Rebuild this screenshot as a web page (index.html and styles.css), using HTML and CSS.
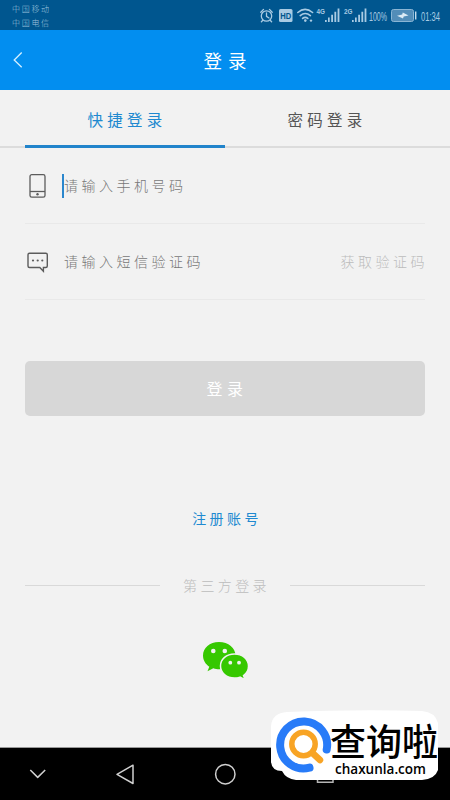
FILE: index.html
```html
<!DOCTYPE html>
<html lang="zh-CN">
<head>
<meta charset="utf-8">
<meta name="viewport" content="width=device-width, initial-scale=1">
<title>登录</title>
<link rel="stylesheet" href="styles.css">
</head>
<body>
<div class="screen">
  <div class="status">
    <div class="carriers"><span>中国移动</span><span>中国电信</span></div>
    <svg class="indicators" width="190" height="30" viewBox="0 0 190 30">
      <g fill="none" stroke="#a9cbe3" stroke-width="1.3" stroke-linecap="round">
        <circle cx="6.500" cy="16" r="5.200"/>
        <path d="M6.500 12.800V16.300L9 18M.8 12.200 3.500 9.400M12.200 12.200 9.500 9.400M2.600 20.500 1.400 21.800M10.400 20.500 11.600 21.800"/>
        <path d="M37.800 12.500Q45 6.200 52.600 12.500M40.200 15.600Q45.200 11.500 50.400 15.600M42.600 18.400Q45.200 16.200 47.800 18.400" stroke-width="1.6"/>
      </g>
      <rect x="19" y="9" width="13.500" height="13" rx="1.500" fill="#a9cbe3"/>
      <text x="20.300" y="19.200" class="hd" textLength="11" lengthAdjust="spacingAndGlyphs">HD</text>
      <g fill="#a9cbe3">
        <circle cx="45.300" cy="20.600" r="1.300"/><circle cx="51" cy="20.600" r="1.200"/>
        <text x="56.500" y="14" class="net" textLength="8.500" lengthAdjust="spacingAndGlyphs">4G</text>
        <path d="M65 20h1.700v2H65zM68 17.500h1.700V22H68zM71.200 14.700h1.800V22h-1.800zM74.400 11.700h1.800V22h-1.800zM77.600 8.500h1.800V22h-1.800z"/>
        <text x="84" y="14" class="net" textLength="8.500" lengthAdjust="spacingAndGlyphs">2G</text>
        <path d="M92 20h1.700v2H92zM95 17.500h1.700V22H95zM98.200 14.700h1.800V22h-1.800zM101.400 11.700h1.800V22h-1.800zM104.600 8.500h1.800V22h-1.800z"/>
        <text x="109" y="20.700" class="num" textLength="18" lengthAdjust="spacingAndGlyphs">100%</text>
        <text x="161" y="20.700" class="num" textLength="19" lengthAdjust="spacingAndGlyphs">01:34</text>
      </g>
      <rect x="131.500" y="9.500" width="22" height="12" rx="2" fill="#528db8" stroke="#8ab5d4"/>
      <path d="M155 11.500h1.400v8H155z" fill="#c4dced"/>
      <path d="M137 15.700 142.200 14.600 142.800 12.600 148.500 15.400 143.700 16.500 143 18.400Z" fill="#dcebf5"/>
    </svg>
  </div>
  <header class="bar">
    <svg class="back" width="10" height="18" viewBox="0 0 10 18"><path d="M8.700 1.500 1.200 9 8.700 16.300" fill="none" stroke="#d5f0ff" stroke-width="1.300"/></svg>
    <h1>登录</h1>
  </header>
  <nav class="tabs">
    <a class="tab active">快捷登录</a>
    <a class="tab">密码登录</a>
  </nav>
  <main class="form">
    <div class="row">
      <svg class="icon" width="24" height="26" viewBox="0 0 24 26"><g fill="none" stroke="#5c5c5c" stroke-width="1.300"><rect x="5" y="1.700" width="15" height="22.500" rx="1.800"/><path d="M5 18.500h15"/></g><circle cx="12.500" cy="21.300" r="1.200" fill="#5c5c5c"/></svg>
      <i class="caret"></i>
      <span class="hint">请输入手机号码</span>
    </div>
    <div class="row code">
      <svg class="icon" width="24" height="26" viewBox="0 0 24 26"><path d="M4.500 4.300h16.300q1.500 0 1.500 1.500V17q0 1.500-1.500 1.500H18.400V22.200L14.800 18.500H4.500Q3 18.500 3 17V5.800Q3 4.300 4.500 4.300Z" fill="none" stroke="#5c5c5c" stroke-width="1.400"/><g fill="#5c5c5c"><circle cx="8" cy="11.500" r="1.100"/><circle cx="12.700" cy="11.500" r="1.100"/><circle cx="17.300" cy="11.500" r="1.100"/></g></svg>
      <span class="hint">请输入短信验证码</span>
      <span class="get">获取验证码</span>
    </div>
    <div class="submit">登录</div>
    <a class="register">注册账号</a>
    <div class="divider"><span>第三方登录</span></div>
    <svg class="wechat" width="48" height="40" viewBox="0 0 48 40">
      <path d="M17 1C7.500 1 1 7 1 14.500c0 5 2.700 8.700 6.300 11.200L5.500 30.200l5.800-3c2 .7 3.800 1 6 1C26 28.200 33.500 22 33.500 14.500S26.500 1 17 1Z" fill="#36c800"/>
      <path d="M32.500 13C24.500 13 18.500 18 18.500 25s6 12 14 12c1.900 0 3.800-.3 5.500-.9l5 2.500-1.500-4c3-2.200 5-5.500 5-9.400 0-7-6-12.200-14-12.200Z" fill="#36c800" stroke="#f2f2f2" stroke-width="1.500"/>
      <g fill="#f2f2f2"><circle cx="11.300" cy="10" r="2.300"/><circle cx="22.800" cy="10" r="2.300"/><circle cx="28.300" cy="21.700" r="1.900"/><circle cx="37" cy="21.700" r="1.900"/></g>
    </svg>
  </main>
  <footer class="nav">
    <svg width="450" height="52" viewBox="0 0 450 52" fill="none" stroke="#d0d0d0" stroke-width="1.500"><path d="M30.300 22 37.700 29.400 45.200 22M133 17.200V35.500L117 26.300Z" stroke-linejoin="round"/><circle cx="225.300" cy="26.200" r="9.700"/><path d="M317.500 22V34.200H333V22" stroke="#b5b5b5"/></svg>
  </footer>
  <div class="watermark">
    <svg width="180" height="72" viewBox="0 0 180 72">
      <path d="M17 2Q90-1 152 1 165 2 168 13V60Q165 69 152 70H26Q16 69 12 61 2 61 1 52V16Q2 3 17 2Z" fill="#fff"/>
      <path d="M39.500 57.700A23.500 23.500 0 1 1 56.700 39.500" fill="none" stroke="#287bf8" stroke-width="8" stroke-linecap="round"/>
      <circle cx="33.500" cy="34" r="11.700" fill="none" stroke="#f8a425" stroke-width="5.500"/>
      <path d="M43 43.500 50 50" stroke="#f8a425" stroke-width="6.500" stroke-linecap="round"/>
      <text class="brand" x="60" y="45.500" textLength="108" lengthAdjust="spacingAndGlyphs">查询啦</text>
      <text class="domain" x="65" y="63.500" textLength="91" lengthAdjust="spacingAndGlyphs">chaxunla.com</text>
    </svg>
  </div>
</div>
</body>
</html>
```
FILE: styles.css
```css
* { box-sizing: border-box; }
body { margin: 0; font-family: "Noto Sans CJK SC", sans-serif; font-weight: 300; }
.screen { position: relative; width: 450px; height: 800px; overflow: hidden; display: flex; flex-direction: column; background: #f2f2f2; }
.status { height: 30px; background: #00568f; display: flex; justify-content: space-between; }
.carriers { display: flex; flex-direction: column; padding: 2px 0 0 12px; font-size: 8px; line-height: 14px; letter-spacing: 1.7px; color: #9fc3dd; }
.hd { font: bold 9.5px "Liberation Sans", sans-serif; fill: #00568f; }
.net { font: bold 7.5px "Liberation Sans", sans-serif; }
.num { font: 12px "Liberation Sans", sans-serif; }
.bar { height: 60px; display: grid; grid-template-columns: 60px 1fr 60px; align-items: center; background: #028ef0; color: #fff; }
.back { margin-left: 13px; }
.bar h1 { margin: 0; text-align: center; font-size: 18.5px; font-weight: 400; letter-spacing: 6px; text-indent: 6px; line-height: 60px; }
.tabs { display: flex; height: 58px; padding: 0 25px; border-bottom: 2px solid #dcdcdc; }
.tab { flex: 1; height: 58px; line-height: 58px; text-align: center; font-size: 15.5px; font-weight: 400; letter-spacing: 4.3px; text-indent: 4px; color: #555; }
.tab.active { color: #2089d0; border-bottom: 3px solid #2184cb; }
.form { flex: 1; display: flex; flex-direction: column; padding: 0 25px; }
.row { display: flex; align-items: center; height: 76px; border-bottom: 1px solid #e9e9e9; font-size: 14px; letter-spacing: 3.5px; color: #777; }
.hint, .get { padding-bottom: 2px; }
.icon { margin-right: 13px; }
.caret { width: 2px; height: 24px; margin-right: -1px; background: #2b87cd; }
.caret + .hint { margin-left: 1px; }
.code .hint { margin-left: 2px; }
.get { margin-left: auto; margin-right: -3px; color: #bcbcbc; }
.submit { height: 55px; margin-top: 61px; border-radius: 5px; background: #d7d7d7; color: #fff; font-size: 16px; font-weight: 400; letter-spacing: 4.5px; text-indent: 4px; line-height: 55px; text-align: center; }
.register { margin-top: 90px; line-height: 24px; text-align: center; font-size: 14px; font-weight: 400; letter-spacing: 3.4px; text-indent: 4px; color: #2089d0; }
.divider { display: flex; align-items: center; gap: 22px; height: 24px; margin-top: 43px; font-size: 14px; letter-spacing: 3.4px; color: #bcbcbc; }
.divider::before, .divider::after { content: ""; flex: 1; height: 1px; background: #d9d9d9; }
.divider span { margin: 0 -2px 0 1px; }
.wechat { align-self: center; margin: 44px 0 0 1px; }
.nav { height: 53px; border-top: 1px solid #999; background: #000; }
.nav svg { display: block; }
.watermark { position: absolute; left: 270px; top: 710px; }
.brand { font-family: "Noto Sans CJK SC", sans-serif; font-size: 37px; font-weight: 500; }
.domain { font-family: "Open Sans", sans-serif; font-size: 14.5px; font-weight: 600; }
```
